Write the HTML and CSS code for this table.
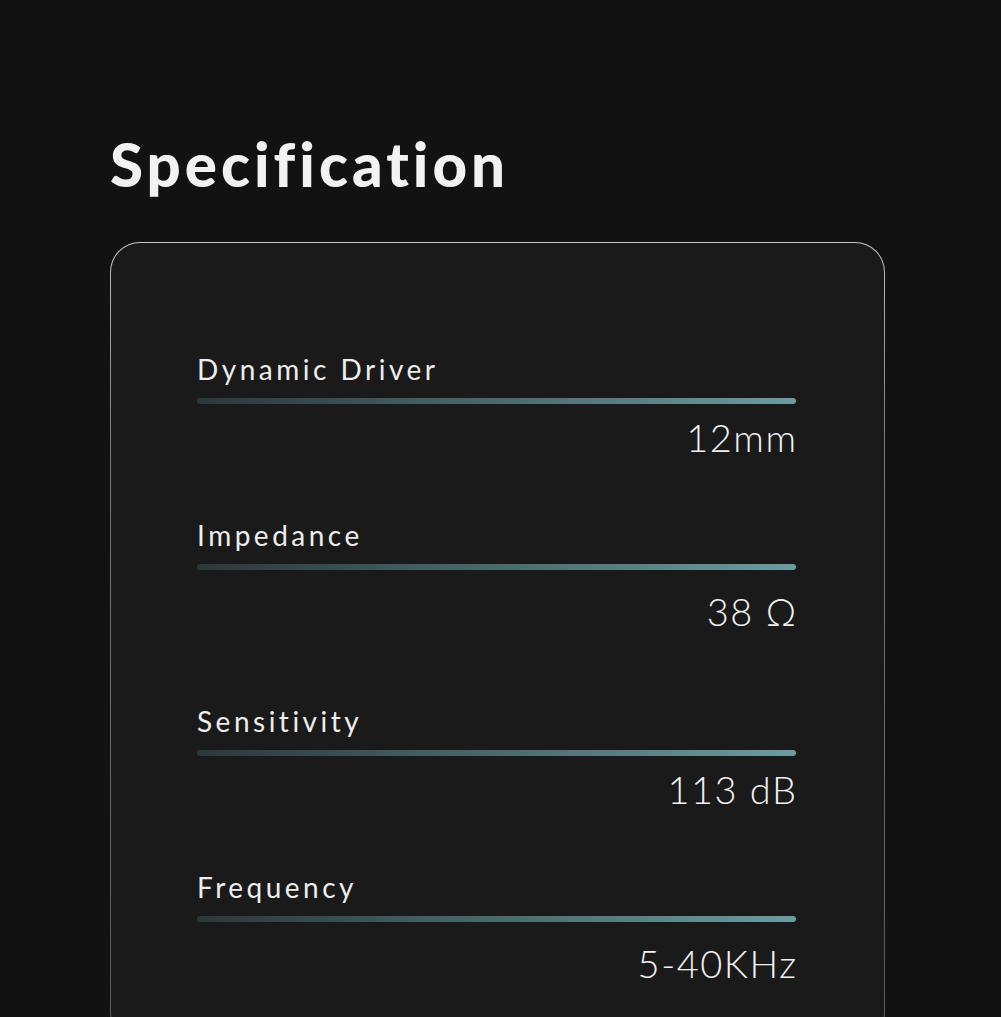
FILE: index.html
```html
<!DOCTYPE html>
<html lang="en">
<head>
<meta charset="utf-8">
<title>Specification</title>
<link rel="stylesheet" href="styles.css">
</head>
<body>
<main class="page">
  <h1 class="title">Specification</h1>
  <section class="card">
    <div class="spec">
      <div class="spec-label">Dynamic Driver</div>
      <div class="spec-bar"></div>
      <div class="spec-value">12mm</div>
    </div>
    <div class="spec spec--loose">
      <div class="spec-label">Impedance</div>
      <div class="spec-bar"></div>
      <div class="spec-value">38 Ω</div>
    </div>
    <div class="spec spec--spaced">
      <div class="spec-label">Sensitivity</div>
      <div class="spec-bar"></div>
      <div class="spec-value">113 dB</div>
    </div>
    <div class="spec spec--loose">
      <div class="spec-label">Frequency</div>
      <div class="spec-bar"></div>
      <div class="spec-value">5-40KHz</div>
    </div>
  </section>
</main>
</body>
</html>
```

FILE: styles.css
```css
html, body {
  margin: 0;
  padding: 0;
  background: #121212;
}

body {
  font-family: Lato, "Noto Sans", sans-serif;
  color: #f1f1f1;
}

.page {
  height: 1017px;
  overflow: hidden;
  box-sizing: border-box;
  padding: 134px 0 0 110px;
}

.title {
  margin: 0;
  font-size: 60px;
  line-height: 60px;
  font-weight: 900;
  letter-spacing: 4px;
  color: #f2f2f2;
}

.card {
  margin-top: 48px;
  width: 775px;
  box-sizing: border-box;
  height: 800px;
  padding: 112px 88px 0 86px;
  border: 1.5px solid transparent;
  border-radius: 30px;
  background:
    linear-gradient(#1a1a1a, #1a1a1a) padding-box,
    linear-gradient(180deg, #c4c4c4 0%, #7a7a7a 25%, #5a5a5a 100%) border-box;
  display: flex;
  flex-direction: column;
}

.spec {
  display: flex;
  flex-direction: column;
}

.spec + .spec {
  margin-top: 65px;
}

.spec.spec--spaced {
  margin-top: 77px;
}

.spec-label {
  font-size: 28px;
  line-height: 28px;
  letter-spacing: 3.5px;
  color: #ededed;
}

.spec-bar {
  margin-top: 15px;
  height: 6px;
  border-radius: 3px;
  background: linear-gradient(90deg, #2c3739 0%, #4a6a6d 50%, #6b9ca0 100%);
}

.spec-value {
  margin-top: 14px;
  align-self: flex-end;
  font-size: 38px;
  line-height: 38px;
  font-weight: 300;
  letter-spacing: 1.5px;
  margin-right: -1.5px;
  color: #f1f1f1;
}

.spec--loose .spec-value {
  margin-top: 22px;
}
```
